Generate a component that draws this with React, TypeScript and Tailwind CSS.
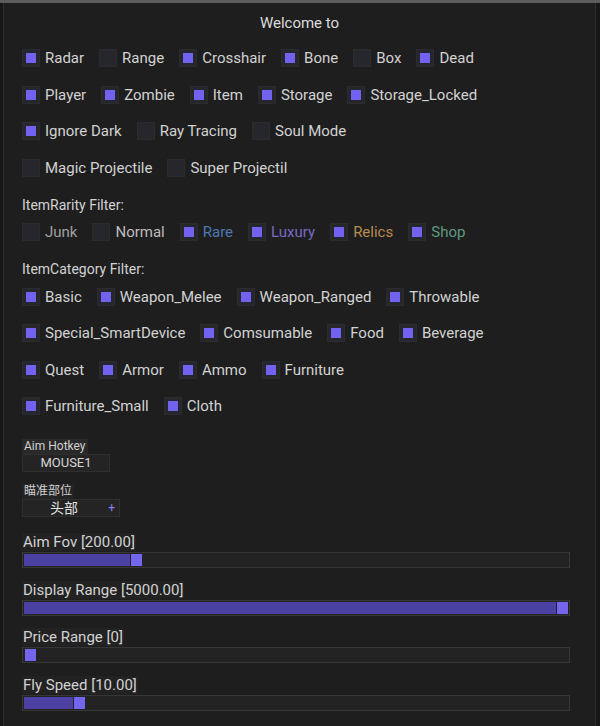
import React from "react";

type Item = { label: string; on: boolean; color?: string };

const rows: Item[][] = [
  [
    { label: "Radar", on: true },
    { label: "Range", on: false },
    { label: "Crosshair", on: true },
    { label: "Bone", on: true },
    { label: "Box", on: false },
    { label: "Dead", on: true },
  ],
  [
    { label: "Player", on: true },
    { label: "Zombie", on: true },
    { label: "Item", on: true },
    { label: "Storage", on: true },
    { label: "Storage_Locked", on: true },
  ],
  [
    { label: "Ignore Dark", on: true },
    { label: "Ray Tracing", on: false },
    { label: "Soul Mode", on: false },
  ],
  [
    { label: "Magic Projectile", on: false },
    { label: "Super Projectil", on: false },
  ],
];

const rarity: Item[] = [
  { label: "Junk", on: false, color: "text-[#a0a0a0]" },
  { label: "Normal", on: false, color: "text-[#bdbdbd]" },
  { label: "Rare", on: true, color: "text-[#4f79b5]" },
  { label: "Luxury", on: true, color: "text-[#7b68c6]" },
  { label: "Relics", on: true, color: "text-[#b98a52]" },
  { label: "Shop", on: true, color: "text-[#5f9a82]" },
];

const category: Item[][] = [
  [
    { label: "Basic", on: true },
    { label: "Weapon_Melee", on: true },
    { label: "Weapon_Ranged", on: true },
    { label: "Throwable", on: true },
  ],
  [
    { label: "Special_SmartDevice", on: true },
    { label: "Comsumable", on: true },
    { label: "Food", on: true },
    { label: "Beverage", on: true },
  ],
  [
    { label: "Quest", on: true },
    { label: "Armor", on: true },
    { label: "Ammo", on: true },
    { label: "Furniture", on: true },
  ],
  [
    { label: "Furniture_Small", on: true },
    { label: "Cloth", on: true },
  ],
];

const sliders = [
  { label: "Aim Fov [200.00]", fill: 106 },
  { label: "Display Range [5000.00]", fill: 532 },
  { label: "Price Range [0]", fill: 0 },
  { label: "Fly Speed [10.00]", fill: 49 },
];

function Check({ item }: { item: Item }) {
  return (
    <div className="flex items-center">
      <div className="w-[18px] h-[18px] bg-[#25272c] border border-[#2c2c30] flex items-center justify-center">
        {item.on && <div className="w-[10px] h-[10px] bg-[#7163ef]" />}
      </div>
      <span className={`ml-[5px] leading-[18px] ${item.color ?? "text-[#d2d2d2]"}`}>
        {item.label}
      </span>
    </div>
  );
}

function CheckRow({ items }: { items: Item[] }) {
  return (
    <div className="flex items-center gap-[15px] h-[18px]">
      {items.map((it) => (
        <Check key={it.label} item={it} />
      ))}
    </div>
  );
}

function Slider({ label, fill }: { label: string; fill: number }) {
  return (
    <div className="flex flex-col">
      <div className="self-start bg-[#222222] px-[1px] text-[15px] leading-[18px] text-[#d2d2d2]">
        {label}
      </div>
      <div className="mt-[1px] w-[548px] h-[16px] bg-[#232323] border border-[#363636] flex items-center px-[1px]">
        <div className="h-[12px] bg-[#4d40a3]" style={{ width: fill }} />
        <div className="h-[12px] w-[11px] bg-[#7466ec] ml-[1px]" />
      </div>
    </div>
  );
}

export default function App() {
  return (
    <div
      className="w-[600px] h-[726px] overflow-hidden bg-[#171717] border-t-[3px] border-[#5c5c5c]"
      style={{ fontFamily: "Roboto, 'Noto Sans CJK SC', sans-serif" }}
    >
      <div className="ml-[3px] mr-[4px] h-[800px] bg-[#1e1e1e] border-l border-r border-[#2e2e2e] pl-[18px] pt-[10px] text-[15px]">
        <div className="text-center text-[#dcdcdc] leading-[20px] pr-[18px]">Welcome to</div>

        <div className="mt-[16px] flex flex-col gap-[18.5px]">
          {rows.map((r, i) => (
            <CheckRow key={i} items={r} />
          ))}
        </div>

        <div className="mt-[20px] text-[14px] leading-[16px] text-[#d2d2d2]">ItemRarity Filter:</div>
        <div className="mt-[10px]">
          <CheckRow items={rarity} />
        </div>

        <div className="mt-[20px] text-[14px] leading-[16px] text-[#d2d2d2]">ItemCategory Filter:</div>
        <div className="mt-[11px] flex flex-col gap-[18.5px]">
          {category.map((r, i) => (
            <CheckRow key={i} items={r} />
          ))}
        </div>

        <div className="mt-[24px] flex flex-col items-start">
          <div className="bg-[#292929] px-[2px] text-[12px] leading-[15px] text-[#d0d0d0]">Aim Hotkey</div>
          <div className="w-[88px] h-[18px] bg-[#242424] border border-[#2f2f2f] text-[13px] text-[#d6d6d6] flex items-center justify-center">
            MOUSE1
          </div>
        </div>

        <div className="mt-[12px] flex flex-col items-start">
          <div className="bg-[#242424] px-[2px] text-[12px] leading-[15px] text-[#d0d0d0]">瞄准部位</div>
          <div className="w-[98px] h-[18px] bg-[#242424] border border-[#2f2f2f] flex items-center">
            <span className="ml-[27px] text-[14px] text-[#e0e0e0]">头部</span>
            <span className="ml-auto mr-[4px] text-[12px] text-[#8a7cf0]">+</span>
          </div>
        </div>

        <div className="mt-[16px] flex flex-col gap-[12.5px]">
          {sliders.map((s) => (
            <Slider key={s.label} label={s.label} fill={s.fill} />
          ))}
        </div>
      </div>
    </div>
  );
}
